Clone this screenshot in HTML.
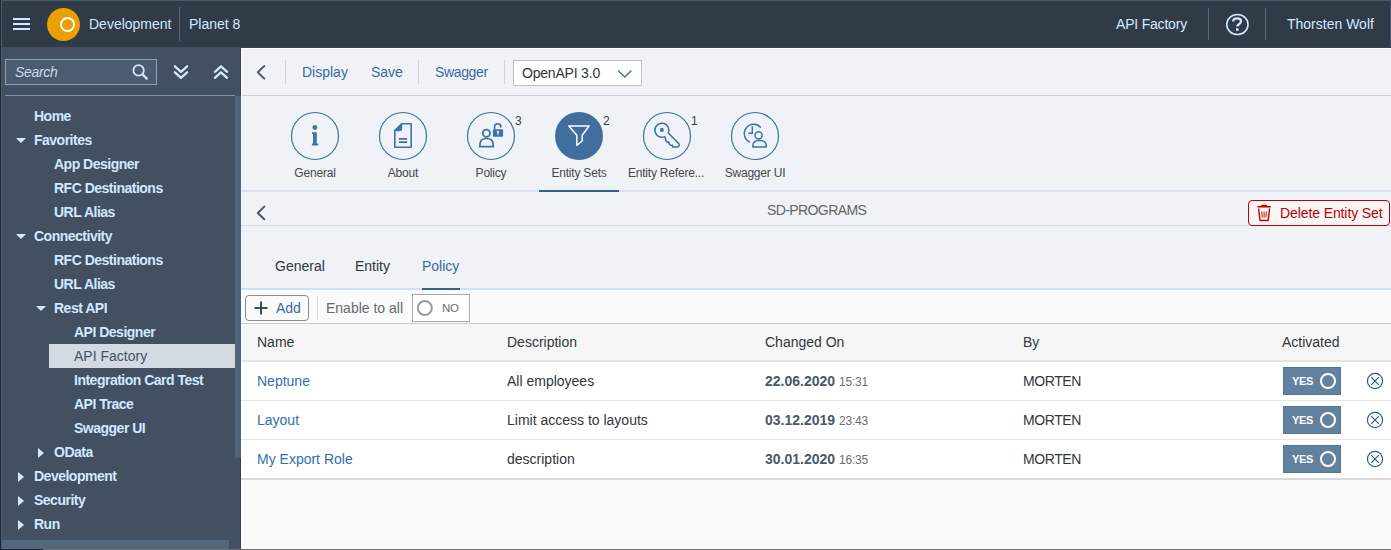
<!DOCTYPE html>
<html><head><meta charset="utf-8">
<style>
*{box-sizing:border-box;margin:0;padding:0}
html,body{width:1391px;height:550px;overflow:hidden;background:#fafafa;font-family:"Liberation Sans",sans-serif}
.a{position:absolute}
.t{position:absolute;white-space:nowrap;line-height:1}
.sbtxt{color:#d1e8ff;font-size:14px;font-weight:bold;letter-spacing:-0.5px}
.tbtn{color:#3b6a9e;font-size:14px}
.lbl{position:absolute;white-space:nowrap;line-height:1;font-size:12px;color:#45484c;letter-spacing:-0.2px;text-align:center;width:100px}
.cnt{position:absolute;line-height:1;font-size:12px;color:#3a3d40}
.hd{position:absolute;white-space:nowrap;line-height:1;font-size:14px;color:#32363a}
.cell{position:absolute;white-space:nowrap;line-height:1;font-size:14px;color:#32363a}
.lnk{color:#2f6eb0}
.dt{font-weight:bold;color:#4a5865}
.tm{font-size:12px;color:#6a6d70;font-weight:normal;letter-spacing:-0.2px}
.yes{position:absolute;width:58px;height:28px;background:#62819f;border:1px solid #55759a}
.yes span{position:absolute;left:8px;top:8px;font-size:11px;font-weight:bold;color:#fff;line-height:1;letter-spacing:-0.3px}
.yes i{position:absolute;left:36px;top:5px;width:16px;height:16px;border-radius:50%;border:2px solid #fff}
</style></head><body>
<!-- frame / backgrounds -->
<div class="a" style="left:0;top:0;width:1px;height:550px;background:#26272e"></div>
<div class="a" style="left:1px;top:0;width:1px;height:550px;background:#4b5b6f"></div>
<div class="a" style="left:2px;top:0;width:1389px;height:47px;background:#313b48;border-top:1px solid #485869"></div>
<div class="a" style="left:1390px;top:1px;width:1px;height:46px;background:#45556a"></div>
<div class="a" style="left:2px;top:47px;width:238px;height:503px;background:#425061"></div>
<div class="a" style="left:240px;top:47px;width:1151px;height:503px;background:#fafafa;border-left:1px solid #33404f;border-top:1px solid #33404f"></div>

<!-- top bar -->
<div class="a" style="left:13px;top:18px;width:17px;height:2px;background:#d1e8ff"></div>
<div class="a" style="left:13px;top:23px;width:17px;height:2px;background:#d1e8ff"></div>
<div class="a" style="left:13px;top:28px;width:17px;height:2px;background:#d1e8ff"></div>
<div class="a" style="left:47px;top:8px;width:33px;height:33px;border-radius:50%;background:#eaa000"></div>
<div class="a" style="left:60px;top:17px;width:15px;height:15px;border-radius:50%;border:2px solid #fff"></div>
<div class="t" style="left:89px;top:17px;font-size:14px;color:#d1e8ff">Development</div>
<div class="a" style="left:179px;top:7px;width:1px;height:34px;background:#5a6878"></div>
<div class="t" style="left:189px;top:17px;font-size:14px;color:#d1e8ff">Planet 8</div>
<div class="t" style="left:1116px;top:17px;font-size:14px;color:#d1e8ff;letter-spacing:-0.2px">API Factory</div>
<div class="a" style="left:1208px;top:8px;width:1px;height:32px;background:#5a6878"></div>
<div class="a" style="left:1265px;top:8px;width:1px;height:32px;background:#5a6878"></div>
<div class="t" style="left:1287px;top:17px;font-size:14px;color:#d1e8ff">Thorsten Wolf</div>

<!-- toolbar -->
<div class="a" style="left:241px;top:48px;width:1150px;height:48px;background:#eff2f6;border-bottom:1px solid #cacccf"></div>
<div class="a" style="left:241px;top:48px;width:1150px;height:1px;background:#fff"></div>
<div class="a" style="left:241px;top:48px;width:1px;height:502px;background:#fff"></div>
<div class="a" style="left:285px;top:60px;width:1px;height:24px;background:#cdd3d9"></div>
<div class="t tbtn" style="left:302px;top:65px">Display</div>
<div class="t tbtn" style="left:371px;top:65px">Save</div>
<div class="a" style="left:418px;top:60px;width:1px;height:24px;background:#cdd3d9"></div>
<div class="t tbtn" style="left:435px;top:65px;letter-spacing:-0.35px">Swagger</div>
<div class="a" style="left:504px;top:60px;width:1px;height:24px;background:#cdd3d9"></div>
<div class="a" style="left:513px;top:60px;width:129px;height:26px;background:#fff;border:1px solid #bfbfbf"></div>
<div class="t" style="left:522px;top:66px;font-size:14px;color:#32363a;letter-spacing:-0.2px">OpenAPI 3.0</div>

<!-- icon tab bar -->
<div class="a" style="left:241px;top:96px;width:1150px;height:96px;background:#eff2f6;border-bottom:2px solid #d7e2ee"></div>
<div class="a" style="left:539px;top:190px;width:80px;height:2px;background:#345f8f"></div>
<div class="lbl" style="left:265px;top:167px">General</div>
<div class="lbl" style="left:353px;top:167px">About</div>
<div class="lbl" style="left:441px;top:167px">Policy</div>
<div class="lbl" style="left:529px;top:167px">Entity Sets</div>
<div class="lbl" style="left:616px;top:167px">Entity Refere...</div>
<div class="lbl" style="left:705px;top:167px">Swagger UI</div>
<div class="cnt" style="left:515px;top:115px">3</div>
<div class="cnt" style="left:603px;top:115px">2</div>
<div class="cnt" style="left:691px;top:115px">1</div>

<!-- subheader -->
<div class="a" style="left:241px;top:192px;width:1150px;height:34px;background:#eff2f6;border-bottom:1px solid #d3dfec"></div>
<div class="t" style="left:767px;top:203px;font-size:14px;color:#62666a;letter-spacing:-0.6px">SD-PROGRAMS</div>
<div class="a" style="left:1248px;top:200px;width:142px;height:26px;background:#f7f7f7;border:1px solid #bb0000;border-radius:4px"></div>
<div class="t" style="left:1280px;top:206px;font-size:14px;color:#bb0000;letter-spacing:-0.1px">Delete Entity Set</div>

<!-- tabs -->
<div class="a" style="left:241px;top:226px;width:1150px;height:64px;background:#eff2f6;border-bottom:2px solid #d3dfec"></div>
<div class="t" style="left:275px;top:259px;font-size:14px;color:#32363a">General</div>
<div class="t" style="left:355px;top:259px;font-size:14px;color:#32363a">Entity</div>
<div class="t" style="left:422px;top:259px;font-size:14px;color:#3b6a9e">Policy</div>
<div class="a" style="left:422px;top:288px;width:38px;height:2px;background:#345f8f"></div>
<div class="a" style="left:241px;top:290px;width:1150px;height:1px;background:#fbfcfd"></div>

<!-- table toolbar -->
<div class="a" style="left:241px;top:290px;width:1150px;height:34px;background:#fafafa;border-bottom:1px solid #cbcbcb"></div>
<div class="a" style="left:245px;top:295px;width:64px;height:26px;border:1px solid #8d8d8d;border-radius:4px"></div>
<div class="t tbtn" style="left:276px;top:301px">Add</div>
<div class="a" style="left:317px;top:296px;width:1px;height:24px;background:#d9d9d9"></div>
<div class="t" style="left:326px;top:301px;font-size:14px;color:#666a6e">Enable to all</div>
<div class="a" style="left:412px;top:294px;width:58px;height:28px;background:#fff;border:1px solid #a8a8a8"></div>
<div class="t" style="left:442px;top:303px;font-size:11.5px;color:#6a6d70;letter-spacing:-0.2px">NO</div>

<!-- table header -->
<div class="a" style="left:241px;top:324px;width:1150px;height:38px;background:#f6f6f6;border-bottom:2px solid #e5e5e5"></div>
<div class="hd" style="left:257px;top:335px">Name</div>
<div class="hd" style="left:507px;top:335px">Description</div>
<div class="hd" style="left:765px;top:335px">Changed On</div>
<div class="hd" style="left:1023px;top:335px">By</div>
<div class="hd" style="left:1282px;top:335px">Activated</div>

<!-- rows -->
<div class="a" style="left:241px;top:362px;width:1150px;height:39px;background:#fff;border-bottom:1px solid #e5e5e5"></div>
<div class="a" style="left:241px;top:401px;width:1150px;height:39px;background:#fff;border-bottom:1px solid #e5e5e5"></div>
<div class="a" style="left:241px;top:440px;width:1150px;height:40px;background:#fff;border-bottom:2px solid #d9d9d9"></div>
<div class="cell lnk" style="left:257px;top:374px">Neptune</div>
<div class="cell" style="left:507px;top:374px">All employees</div>
<div class="cell dt" style="left:765px;top:374px">22.06.2020 <span class="tm">15:31</span></div>
<div class="cell" style="left:1023px;top:374px;letter-spacing:-0.4px">MORTEN</div>
<div class="yes" style="left:1283px;top:367px"><span>YES</span><i></i></div>
<div class="cell lnk" style="left:257px;top:413px">Layout</div>
<div class="cell" style="left:507px;top:413px">Limit access to layouts</div>
<div class="cell dt" style="left:765px;top:413px">03.12.2019 <span class="tm">23:43</span></div>
<div class="cell" style="left:1023px;top:413px;letter-spacing:-0.4px">MORTEN</div>
<div class="yes" style="left:1283px;top:406px"><span>YES</span><i></i></div>
<div class="cell lnk" style="left:257px;top:452px">My Export Role</div>
<div class="cell" style="left:507px;top:452px">description</div>
<div class="cell dt" style="left:765px;top:452px">30.01.2020 <span class="tm">16:35</span></div>
<div class="cell" style="left:1023px;top:452px;letter-spacing:-0.4px">MORTEN</div>
<div class="yes" style="left:1283px;top:445px"><span>YES</span><i></i></div><!-- sidebar -->
<div class="a" style="left:5px;top:59px;width:152px;height:26px;background:#4b5c71;border:1px solid #8aa0b5"></div>
<div class="t" style="left:15px;top:65px;font-size:14px;font-style:italic;color:#c8d8e8;letter-spacing:-0.3px">Search</div>
<div class="a" style="left:5px;top:95px;width:230px;height:1px;background:#7a93ad"></div>
<div class="a" style="left:235px;top:96px;width:6px;height:362px;background:#52647a"></div>
<div class="a" style="left:2px;top:540px;width:227px;height:9px;background:#52667c"></div>
<div class="a" style="left:0;top:549px;width:43px;height:1px;background:#26272e"></div>
<div class="a" style="left:43px;top:549px;width:1348px;height:1px;background:#6e6e6e"></div>
<div class="t sbtxt" style="left:34px;top:109px">Home</div>
<div class="t sbtxt" style="left:34px;top:133px">Favorites</div>
<div class="a" style="left:16px;top:138px;width:0;height:0;border-left:5px solid transparent;border-right:5px solid transparent;border-top:5px solid #d1e8ff"></div>
<div class="t sbtxt" style="left:54px;top:157px">App Designer</div>
<div class="t sbtxt" style="left:54px;top:181px">RFC Destinations</div>
<div class="t sbtxt" style="left:54px;top:205px">URL Alias</div>
<div class="t sbtxt" style="left:34px;top:229px">Connectivity</div>
<div class="a" style="left:16px;top:234px;width:0;height:0;border-left:5px solid transparent;border-right:5px solid transparent;border-top:5px solid #d1e8ff"></div>
<div class="t sbtxt" style="left:54px;top:253px">RFC Destinations</div>
<div class="t sbtxt" style="left:54px;top:277px">URL Alias</div>
<div class="t sbtxt" style="left:54px;top:301px">Rest API</div>
<div class="a" style="left:36px;top:306px;width:0;height:0;border-left:5px solid transparent;border-right:5px solid transparent;border-top:5px solid #d1e8ff"></div>
<div class="t sbtxt" style="left:74px;top:325px">API Designer</div>
<div class="a" style="left:49px;top:344px;width:186px;height:24px;background:#d3dae2"></div>
<div class="t" style="left:74px;top:349px;font-size:14px;color:#435468">API Factory</div>
<div class="t sbtxt" style="left:74px;top:373px">Integration Card Test</div>
<div class="t sbtxt" style="left:74px;top:397px">API Trace</div>
<div class="t sbtxt" style="left:74px;top:421px">Swagger UI</div>
<div class="t sbtxt" style="left:54px;top:445px">OData</div>
<div class="a" style="left:38px;top:448px;width:0;height:0;border-top:5px solid transparent;border-bottom:5px solid transparent;border-left:6px solid #d1e8ff"></div>
<div class="t sbtxt" style="left:34px;top:469px">Development</div>
<div class="a" style="left:18px;top:472px;width:0;height:0;border-top:5px solid transparent;border-bottom:5px solid transparent;border-left:6px solid #d1e8ff"></div>
<div class="t sbtxt" style="left:34px;top:493px">Security</div>
<div class="a" style="left:18px;top:496px;width:0;height:0;border-top:5px solid transparent;border-bottom:5px solid transparent;border-left:6px solid #d1e8ff"></div>
<div class="t sbtxt" style="left:34px;top:517px">Run</div>
<div class="a" style="left:18px;top:520px;width:0;height:0;border-top:5px solid transparent;border-bottom:5px solid transparent;border-left:6px solid #d1e8ff"></div><svg class="a" style="left:0;top:0" width="1391" height="550" viewBox="0 0 1391 550" fill="none">
<!-- help -->
<ellipse cx="1237.4" cy="24.5" rx="10.6" ry="10" stroke="#d1e8ff" stroke-width="1.6"/>
<path d="M1233.2 21.6 Q1233.2 18.3 1237.2 18.3 Q1241 18.3 1241 21.2 Q1241 23 1239 24.2 Q1237.3 25.2 1237.3 26.6" stroke="#d1e8ff" stroke-width="2.3"/>
<rect x="1236" y="28.3" width="2.6" height="2.5" fill="#d1e8ff"/>
<!-- search -->
<circle cx="138.6" cy="70.4" r="5.2" stroke="#d1e8ff" stroke-width="1.8"/>
<path d="M142.4 74.4 L146.8 78.6" stroke="#d1e8ff" stroke-width="2.2" stroke-linecap="round"/>
<!-- double chevrons -->
<path d="M174.9 66.3 L181 71.8 L187.1 66.3 M174.9 72.3 L181 77.8 L187.1 72.3" stroke="#d1e8ff" stroke-width="2.3" stroke-linecap="round" stroke-linejoin="round"/>
<path d="M214.9 71.8 L221 66.3 L227.1 71.8 M214.9 77.8 L221 72.3 L227.1 77.8" stroke="#d1e8ff" stroke-width="2.3" stroke-linecap="round" stroke-linejoin="round"/>
<!-- back chevrons -->
<path d="M264.3 66 L257.8 72.3 L264.3 78.6" stroke="#495a6c" stroke-width="2" stroke-linecap="round" stroke-linejoin="round"/>
<path d="M264.3 206.6 L257.8 213 L264.3 219.3" stroke="#495a6c" stroke-width="2" stroke-linecap="round" stroke-linejoin="round"/>
<!-- select chevron -->
<path d="M618.5 71 L624.8 77 L631 71" stroke="#3b6a9e" stroke-width="1.3" stroke-linecap="round" stroke-linejoin="round"/>
<!-- icon tab circles -->
<circle cx="315" cy="136" r="23.5" stroke="#3f72a7" stroke-width="1.2"/>
<circle cx="403" cy="136" r="23.5" stroke="#3f72a7" stroke-width="1.2"/>
<circle cx="491" cy="136" r="23.5" stroke="#3f72a7" stroke-width="1.2"/>
<circle cx="579" cy="136" r="24" fill="#406f9f"/>
<circle cx="667" cy="136" r="23.5" stroke="#3f72a7" stroke-width="1.2"/>
<circle cx="755" cy="136" r="23.5" stroke="#3f72a7" stroke-width="1.2"/>
<!-- info i -->
<circle cx="314.8" cy="127.5" r="2.4" fill="#3f72a7"/>
<path d="M312 132.2 L316.8 132.2 L316.8 143.6 L318.2 143.6 L318.2 145.6 L311.9 145.6 L311.9 143.6 L313 143.6 L313 134 L312 134 Z" fill="#3f72a7"/>
<!-- document -->
<path d="M394.8 130.6 L401.6 123.7 L411.2 123.7 L411.2 147.2 L394.8 147.2 Z" stroke="#3f72a7" stroke-width="1.6" stroke-linejoin="round"/>
<path d="M394.3 131.2 L402.2 123.2 L402.2 128.5 Q402.2 131.2 399.5 131.2 Z" fill="#3f72a7"/>
<path d="M398.9 138.9 L407.1 138.9 M398.9 142.2 L407.1 142.2" stroke="#3f72a7" stroke-width="1.7"/>
<!-- person lock -->
<circle cx="486.4" cy="133.2" r="3.6" stroke="#3f72a7" stroke-width="1.8"/>
<path d="M479.9 146.7 L479.9 145 Q479.9 138.5 486.5 138.5 Q493.2 138.5 493.2 145 L493.2 146.7 Z" stroke="#3f72a7" stroke-width="1.7" stroke-linejoin="round"/>
<rect x="492.9" y="129.2" width="10.2" height="7.5" rx="1" fill="#3f72a7"/>
<path d="M494.6 129.3 L494.6 126.5 Q494.6 123.7 497.7 123.7 Q500.8 123.7 500.8 126.2 L500.8 127" stroke="#3f72a7" stroke-width="1.6" stroke-linecap="round"/>
<circle cx="497.9" cy="131.9" r="1.1" fill="#eff2f6"/>
<path d="M497.9 132.5 L497.9 134.8" stroke="#eff2f6" stroke-width="1.1"/>
<!-- funnel -->
<path d="M568.8 125.9 L589.2 125.9 L582.2 135.2 L582.2 141 L576.8 145.4 L576.8 135.2 Z" stroke="#fff" stroke-width="1.5" stroke-linejoin="round"/>
<!-- key -->
<path d="M668.3 133.05 L678.67 143.43 Q680.2 145.6 677.8 147 L672.5 147 L672.5 145.2 L670.6 145.2 L669 143.6 L669 142 L667.2 142 L665.6 140.4 L665.6 138.6 L664.75 136.6 A7 7 0 1 1 668.3 133.05 Z" stroke="#3f72a7" stroke-width="1.5" stroke-linejoin="round"/>
<ellipse cx="661.9" cy="129.9" rx="1.9" ry="2.2" fill="#3f72a7"/>
<!-- clock person -->
<path d="M760.8 127.5 A9.4 9.4 0 1 0 750.2 142.4" stroke="#3f72a7" stroke-width="1.5"/>
<path d="M752.3 126.3 L752.3 133.3 L748.2 133.3" stroke="#3f72a7" stroke-width="1.5"/>
<circle cx="758.6" cy="135.3" r="3.6" stroke="#3f72a7" stroke-width="1.5"/>
<path d="M752.8 147 L752.8 146 Q752.8 140.6 759.6 140.6 Q766.3 140.6 766.3 146 L766.3 147 Z" stroke="#3f72a7" stroke-width="1.5" stroke-linejoin="round"/>
<!-- trash -->
<path d="M1257.4 206.7 L1270.8 206.7 M1261.5 206.5 L1262.2 205.4 L1266 205.4 L1266.7 206.5" stroke="#bb0000" stroke-width="1.4"/>
<path d="M1258.6 208.5 L1260 220.5 L1268.2 220.5 L1269.6 208.5" stroke="#bb0000" stroke-width="1.4" stroke-linejoin="round"/>
<path d="M1261.7 211.5 L1262.3 217.5 M1264.1 211.5 L1264.1 217.5 M1266.5 211.5 L1265.9 217.5" stroke="#bb0000" stroke-width="0.9"/>
<!-- plus -->
<path d="M261 301.5 L261 314.5 M254.5 308 L267.5 308" stroke="#3e4d5e" stroke-width="2"/>
<!-- NO toggle circle -->
<circle cx="424.8" cy="308" r="7" stroke="#9c9c9c" stroke-width="2"/>
<!-- X circles -->
<g stroke="#2b5c8a" stroke-width="1.2">
<circle cx="1375" cy="381" r="7.6"/><path d="M1371.2 377.2 L1378.8 384.8 M1378.8 377.2 L1371.2 384.8"/>
<circle cx="1375" cy="420" r="7.6"/><path d="M1371.2 416.2 L1378.8 423.8 M1378.8 416.2 L1371.2 423.8"/>
<circle cx="1375" cy="459" r="7.6"/><path d="M1371.2 455.2 L1378.8 462.8 M1378.8 455.2 L1371.2 462.8"/>
</g>
</svg>
</body></html>
